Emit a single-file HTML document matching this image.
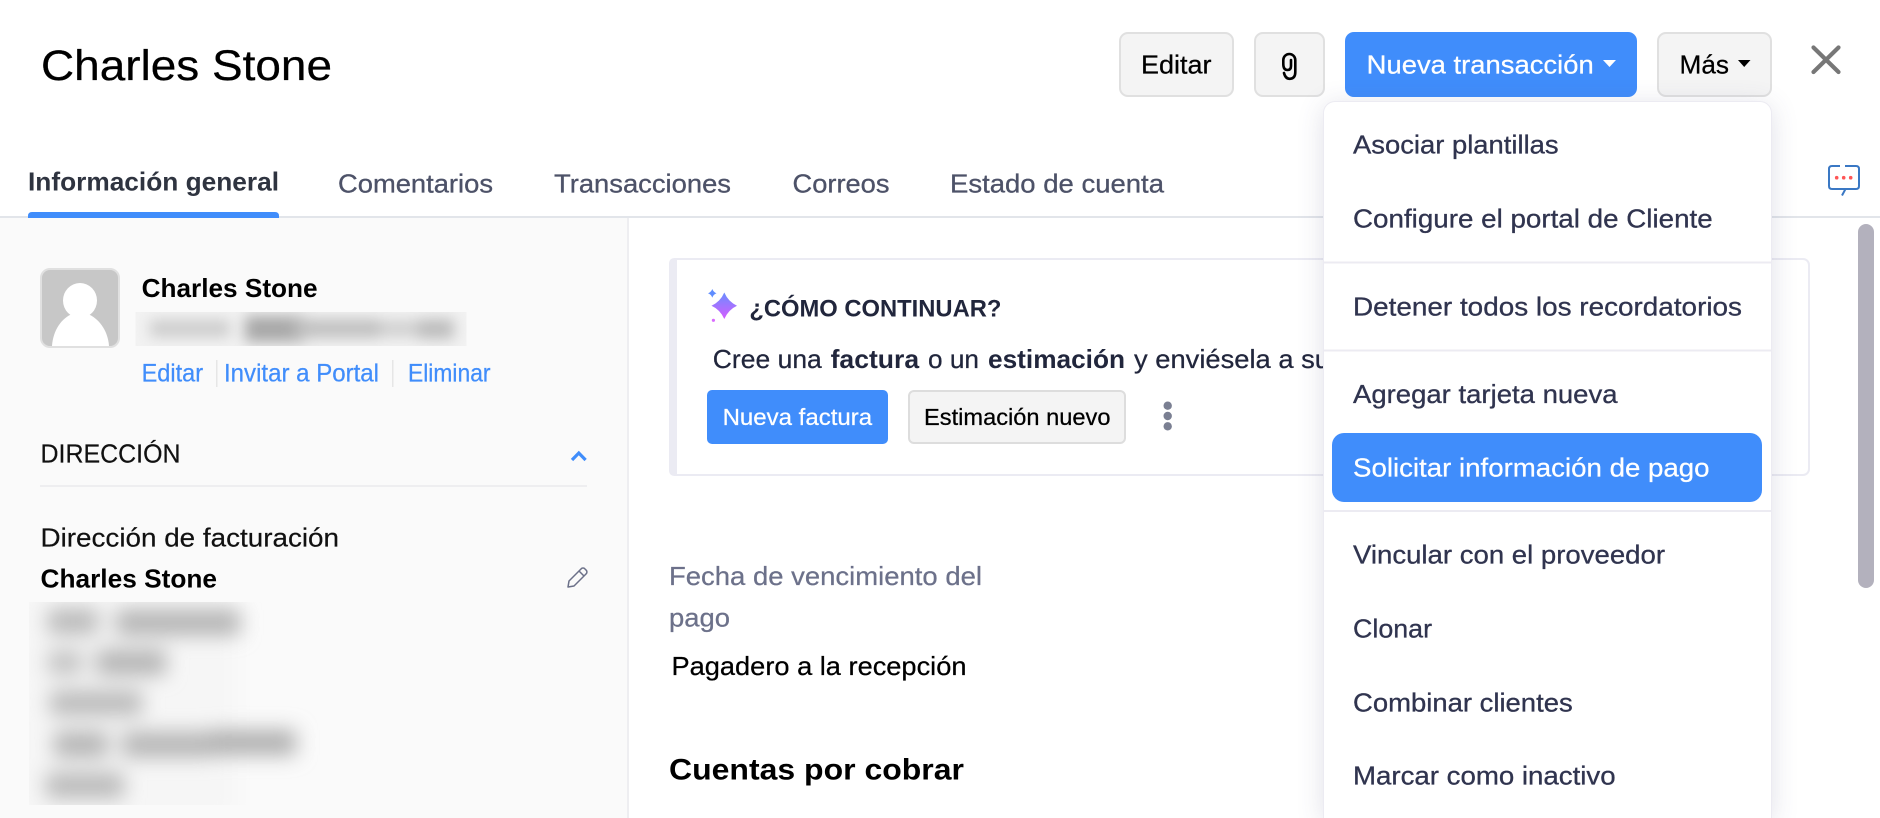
<!DOCTYPE html>
<html lang="es">
<head>
<meta charset="utf-8">
<title>Charles Stone</title>
<style>
html,body{margin:0;padding:0;background:#fff;width:1880px;height:818px;overflow:hidden}
#page{position:relative;width:1880px;height:818px;overflow:hidden;background:#fff}
svg{position:absolute;left:0;top:0;display:block}
text{font-family:"Liberation Sans",sans-serif;white-space:pre}
.b{font-weight:700}
text[fill="#30344f"]{stroke:#30344f;stroke-width:.3}
text[fill="#4d5268"]{stroke:#4d5268;stroke-width:.3}
text[fill="#000"]:not(.b){stroke:#000;stroke-width:.25}
text[fill="#111"]{stroke:#111;stroke-width:.2}
text[fill="#21263c"]:not(.b){stroke:#21263c;stroke-width:.25}
text[fill="#6c718a"]{stroke:#6c718a;stroke-width:.25}
text[fill="#fff"]{stroke:#fff;stroke-width:.25}
text[fill="#408dfb"]{stroke:#408dfb;stroke-width:.25}
.menu{position:absolute;left:1323px;top:101px;width:447px;height:716px;background:#fff;border:1px solid #ecebf2;border-bottom:0;border-radius:12px 12px 0 0;box-shadow:0 4px 26px rgba(70,70,120,.17);padding:0 0 1px 0}
</style>
</head>
<body>
<div id="page">
<svg width="1880" height="818" viewBox="0 0 1880 818">
<defs>
<filter id="bl" x="-20%" y="-80%" width="140%" height="260%"><feGaussianBlur stdDeviation="7"/></filter>
<filter id="bl2" x="-30%" y="-80%" width="160%" height="260%"><feGaussianBlur stdDeviation="10"/></filter>
<clipPath id="c1"><rect x="135.5" y="312" width="331" height="34"/></clipPath>
<clipPath id="c2"><rect x="29" y="602" width="300" height="203"/></clipPath>
<linearGradient id="sp" x1="0" y1="0" x2="0" y2="1"><stop offset="0" stop-color="#6a8dff"/><stop offset="1" stop-color="#d65dff"/></linearGradient>
</defs>

<!-- sidebar -->
<rect x="0" y="218" width="627" height="600" fill="#fafafa"/>
<rect x="627" y="218" width="2" height="600" fill="#eeeef1"/>

<!-- header -->
<text x="41" y="80" font-size="43" textLength="291" lengthAdjust="spacingAndGlyphs" fill="#000">Charles Stone</text>

<rect x="1120" y="33" width="113" height="63" rx="8" fill="#f4f4f4" stroke="#e0e0e0" stroke-width="2"/>
<text x="1141" y="73.5" font-size="26" textLength="70.5" lengthAdjust="spacingAndGlyphs" fill="#000">Editar</text>

<rect x="1255" y="33" width="69" height="63" rx="8" fill="#f4f4f4" stroke="#e0e0e0" stroke-width="2"/>
<path d="M1284 73 Q1285.5 79 1290 78.8 Q1295.3 78.5 1295.3 72 V60 A6 6 0 0 0 1283.3 60 V64 Q1283.3 70 1287.5 70 Q1291 70 1291 66 V60" fill="none" stroke="#000" stroke-width="2.6" stroke-linecap="round"/>

<rect x="1345" y="32" width="292" height="65" rx="9" fill="#408dfb"/>
<text x="1366.7" y="73.5" font-size="26" textLength="227" lengthAdjust="spacingAndGlyphs" fill="#fff">Nueva transacción</text>
<path d="M1603 60 H1616 L1609.5 67 Z" fill="#fff"/>

<rect x="1658" y="33" width="113" height="63" rx="8" fill="#f4f4f4" stroke="#e0e0e0" stroke-width="2"/>
<text x="1679.5" y="73.5" font-size="26" textLength="49.5" lengthAdjust="spacingAndGlyphs" fill="#000">Más</text>
<path d="M1738 60 H1750.5 L1744.2 67 Z" fill="#000"/>

<path d="M1813.5 47.5 L1838.5 72 M1838.5 47.5 L1813.5 72" stroke="#777" stroke-width="4.2" stroke-linecap="round" fill="none"/>

<!-- tabs -->
<rect x="0" y="216" width="1880" height="2" fill="#e2e5ea"/>
<text x="28" y="190.5" font-size="26" class="b" textLength="251" lengthAdjust="spacingAndGlyphs" fill="#2f3440">Información general</text>
<path d="M28 218 V216 Q28 212 32 212 H275 Q279 212 279 216 V218 Z" fill="#408dfb"/>
<text x="338" y="192.5" font-size="26" textLength="155" lengthAdjust="spacingAndGlyphs" fill="#4d5268">Comentarios</text>
<text x="554" y="192.5" font-size="26" textLength="177" lengthAdjust="spacingAndGlyphs" fill="#4d5268">Transacciones</text>
<text x="792.5" y="192.5" font-size="26" textLength="97" lengthAdjust="spacingAndGlyphs" fill="#4d5268">Correos</text>
<text x="950" y="192.5" font-size="26" textLength="214" lengthAdjust="spacingAndGlyphs" fill="#4d5268">Estado de cuenta</text>

<!-- comment icon -->
<path d="M1840 166 H1832 Q1829 166 1829 169 V186 Q1829 189 1832 189 H1845.5 L1842 195.5 M1845 166 H1856 Q1859 166 1859 169 V186 Q1859 189 1856 189 H1845.5" fill="none" stroke="#3a78c4" stroke-width="2"/>
<circle cx="1836.7" cy="177.7" r="1.8" fill="#f55"/><circle cx="1843.7" cy="177.7" r="1.8" fill="#f55"/><circle cx="1850.7" cy="177.7" r="1.8" fill="#f55"/>

<!-- scrollbar -->
<rect x="1858" y="224" width="16" height="364" rx="8" fill="#b3b1bd"/>

<!-- profile -->
<rect x="41" y="269" width="78" height="78" rx="9" fill="#c7c7c7" stroke="#e0e0e0" stroke-width="2"/>
<ellipse cx="80" cy="300.5" rx="17" ry="17.5" fill="#fff"/>
<path d="M52 346 C53 330 62 318 72 314 L88 314 C98 318 108 330 109 346 Z" fill="#fff"/>
<text x="141.6" y="297" font-size="26" class="b" textLength="176" lengthAdjust="spacingAndGlyphs" fill="#000">Charles Stone</text>

<g clip-path="url(#c1)">
<rect x="135.5" y="312" width="331" height="34" fill="#f2f2f2"/>
<g filter="url(#bl)">
<rect x="150" y="320" width="80" height="17" fill="#cccccc"/>
<rect x="245" y="316" width="60" height="26" fill="#a8a8a8"/>
<rect x="295" y="319" width="85" height="19" fill="#c0c0c0"/>
<rect x="380" y="320" width="40" height="17" fill="#d0d0d0"/>
<rect x="418" y="319" width="36" height="20" fill="#bcbcbc"/>
</g>
</g>

<text x="141.6" y="381.5" font-size="25" textLength="61.5" lengthAdjust="spacingAndGlyphs" fill="#408dfb">Editar</text>
<rect x="216" y="360" width="1.5" height="27" fill="#e6e6e6"/>
<text x="224" y="381.5" font-size="25" textLength="155" lengthAdjust="spacingAndGlyphs" fill="#408dfb">Invitar a Portal</text>
<rect x="392" y="360" width="1.5" height="27" fill="#e6e6e6"/>
<text x="408" y="381.5" font-size="25" textLength="82.5" lengthAdjust="spacingAndGlyphs" fill="#408dfb">Eliminar</text>

<text x="40.5" y="462.5" font-size="26" textLength="140" lengthAdjust="spacingAndGlyphs" fill="#111">DIRECCIÓN</text>
<path d="M572 460 L578.8 453 L585.6 460" fill="none" stroke="#408dfb" stroke-width="3.2"/>
<rect x="40" y="485" width="547" height="2" fill="#eeeef0"/>

<text x="40.5" y="546.5" font-size="26" textLength="298.5" lengthAdjust="spacingAndGlyphs" fill="#111">Dirección de facturación</text>
<text x="40.5" y="587.5" font-size="26" class="b" textLength="176.5" lengthAdjust="spacingAndGlyphs" fill="#000">Charles Stone</text>
<path transform="translate(-10 0)" d="M578 587 L579 581 L591 569 A2.6 2.6 0 0 1 595 569 L596 570 A2.6 2.6 0 0 1 596 574 L584 586 Z M589 571 L594 576" fill="none" stroke="#6b7088" stroke-width="1.5" stroke-linejoin="round"/>

<g clip-path="url(#c2)">
<rect x="0" y="585" width="235" height="235" fill="#f6f6f6" filter="url(#bl2)"/>
<g filter="url(#bl2)">
<rect x="48" y="609" width="50" height="25" fill="#b8b8b8"/>
<rect x="116" y="610" width="124" height="25" fill="#b2b2b2"/>
<rect x="48" y="651" width="34" height="23" fill="#c0c0c0"/>
<rect x="96" y="650" width="70" height="25" fill="#b2b2b2"/>
<rect x="50" y="691" width="92" height="24" fill="#b8b8b8"/>
<rect x="54" y="732" width="54" height="25" fill="#b2b2b2"/>
<rect x="122" y="732" width="90" height="25" fill="#b4b4b4"/>
<rect x="210" y="730" width="86" height="25" fill="#aeaeae"/>
<rect x="46" y="773" width="78" height="25" fill="#b8b8b8"/>
</g>
</g>

<!-- card -->
<rect x="670" y="259" width="1139" height="216" rx="6" fill="#fff" stroke="#ebebf3" stroke-width="2"/>
<path d="M675 258 Q669 258 669 264 V470 Q669 476 675 476 H677 V258 Z" fill="#ebebf3"/>

<path d="M724.3 292.5 Q728.3 301.7 737 305.7 Q728.3 309.7 724.3 319 Q720.3 309.7 711.5 305.7 Q720.3 301.7 724.3 292.5 Z" fill="url(#sp)"/>
<path d="M712.3 289 Q713.5 292.1 716.5 293.3 Q713.5 294.5 712.3 297.6 Q711.1 294.5 708 293.3 Q711.1 292.1 712.3 289 Z" fill="#5f8dff"/>
<circle cx="713.4" cy="320.3" r="1.6" fill="#d96cff"/>

<text x="749.4" y="316.5" font-size="24" class="b" textLength="252" lengthAdjust="spacingAndGlyphs" fill="#21263c">¿CÓMO CONTINUAR?</text>

<text x="712.8" y="368" font-size="26" textLength="109" lengthAdjust="spacingAndGlyphs" fill="#21263c">Cree una</text>
<text x="830.6" y="368" font-size="26" class="b" textLength="88.5" lengthAdjust="spacingAndGlyphs" fill="#21263c">factura</text>
<text x="928" y="368" font-size="26" textLength="51" lengthAdjust="spacingAndGlyphs" fill="#21263c">o un</text>
<text x="988" y="368" font-size="26" class="b" textLength="137" lengthAdjust="spacingAndGlyphs" fill="#21263c">estimación</text>
<text x="1134" y="368" font-size="26" textLength="196" lengthAdjust="spacingAndGlyphs" fill="#21263c">y enviésela a su</text>

<rect x="707" y="390" width="181" height="54" rx="5" fill="#408dfb"/>
<text x="722.6" y="425" font-size="23" textLength="149.5" lengthAdjust="spacingAndGlyphs" fill="#fff">Nueva factura</text>
<rect x="909" y="391" width="216" height="52" rx="5" fill="#f4f4f4" stroke="#ddd" stroke-width="2"/>
<text x="924" y="425" font-size="23" textLength="186.5" lengthAdjust="spacingAndGlyphs" fill="#000">Estimación nuevo</text>
<circle cx="1167.7" cy="405.7" r="4.2" fill="#7a7f92"/><circle cx="1167.7" cy="416" r="4.2" fill="#7a7f92"/><circle cx="1167.7" cy="426.3" r="4.2" fill="#7a7f92"/>

<!-- details -->
<text x="669" y="585" font-size="26" textLength="313" lengthAdjust="spacingAndGlyphs" fill="#6c718a">Fecha de vencimiento del</text>
<text x="669" y="626.5" font-size="26" textLength="61" lengthAdjust="spacingAndGlyphs" fill="#6c718a">pago</text>
<text x="671.5" y="675" font-size="26" textLength="295" lengthAdjust="spacingAndGlyphs" fill="#000">Pagadero a la recepción</text>
<text x="669" y="779.5" font-size="30" class="b" textLength="295" lengthAdjust="spacingAndGlyphs" fill="#000">Cuentas por cobrar</text>
</svg>

<div class="menu"></div>

<svg width="1880" height="818" viewBox="0 0 1880 818">
<rect x="1324" y="261.5" width="447" height="2" fill="#ecebf2"/>
<rect x="1324" y="349.5" width="447" height="2" fill="#ecebf2"/>
<rect x="1324" y="510" width="447" height="2" fill="#ecebf2"/>
<rect x="1332" y="433" width="430" height="69" rx="12" fill="#408dfb"/>
<text x="1353" y="153.3" font-size="26" textLength="205.6" lengthAdjust="spacingAndGlyphs" fill="#30344f">Asociar plantillas</text>
<text x="1353" y="227.3" font-size="26" textLength="359.7" lengthAdjust="spacingAndGlyphs" fill="#30344f">Configure el portal de Cliente</text>
<text x="1353" y="315.3" font-size="26" textLength="389" lengthAdjust="spacingAndGlyphs" fill="#30344f">Detener todos los recordatorios</text>
<text x="1353" y="402.8" font-size="26" textLength="264.5" lengthAdjust="spacingAndGlyphs" fill="#30344f">Agregar tarjeta nueva</text>
<text x="1353" y="476.7" font-size="26" textLength="356.5" lengthAdjust="spacingAndGlyphs" fill="#fff">Solicitar información de pago</text>
<text x="1353" y="563.3" font-size="26" textLength="312" lengthAdjust="spacingAndGlyphs" fill="#30344f">Vincular con el proveedor</text>
<text x="1353" y="637.3" font-size="26" textLength="79" lengthAdjust="spacingAndGlyphs" fill="#30344f">Clonar</text>
<text x="1353" y="711.3" font-size="26" textLength="219.7" lengthAdjust="spacingAndGlyphs" fill="#30344f">Combinar clientes</text>
<text x="1353" y="784.3" font-size="26" textLength="262.6" lengthAdjust="spacingAndGlyphs" fill="#30344f">Marcar como inactivo</text>
</svg>
</div>
</body>
</html>
